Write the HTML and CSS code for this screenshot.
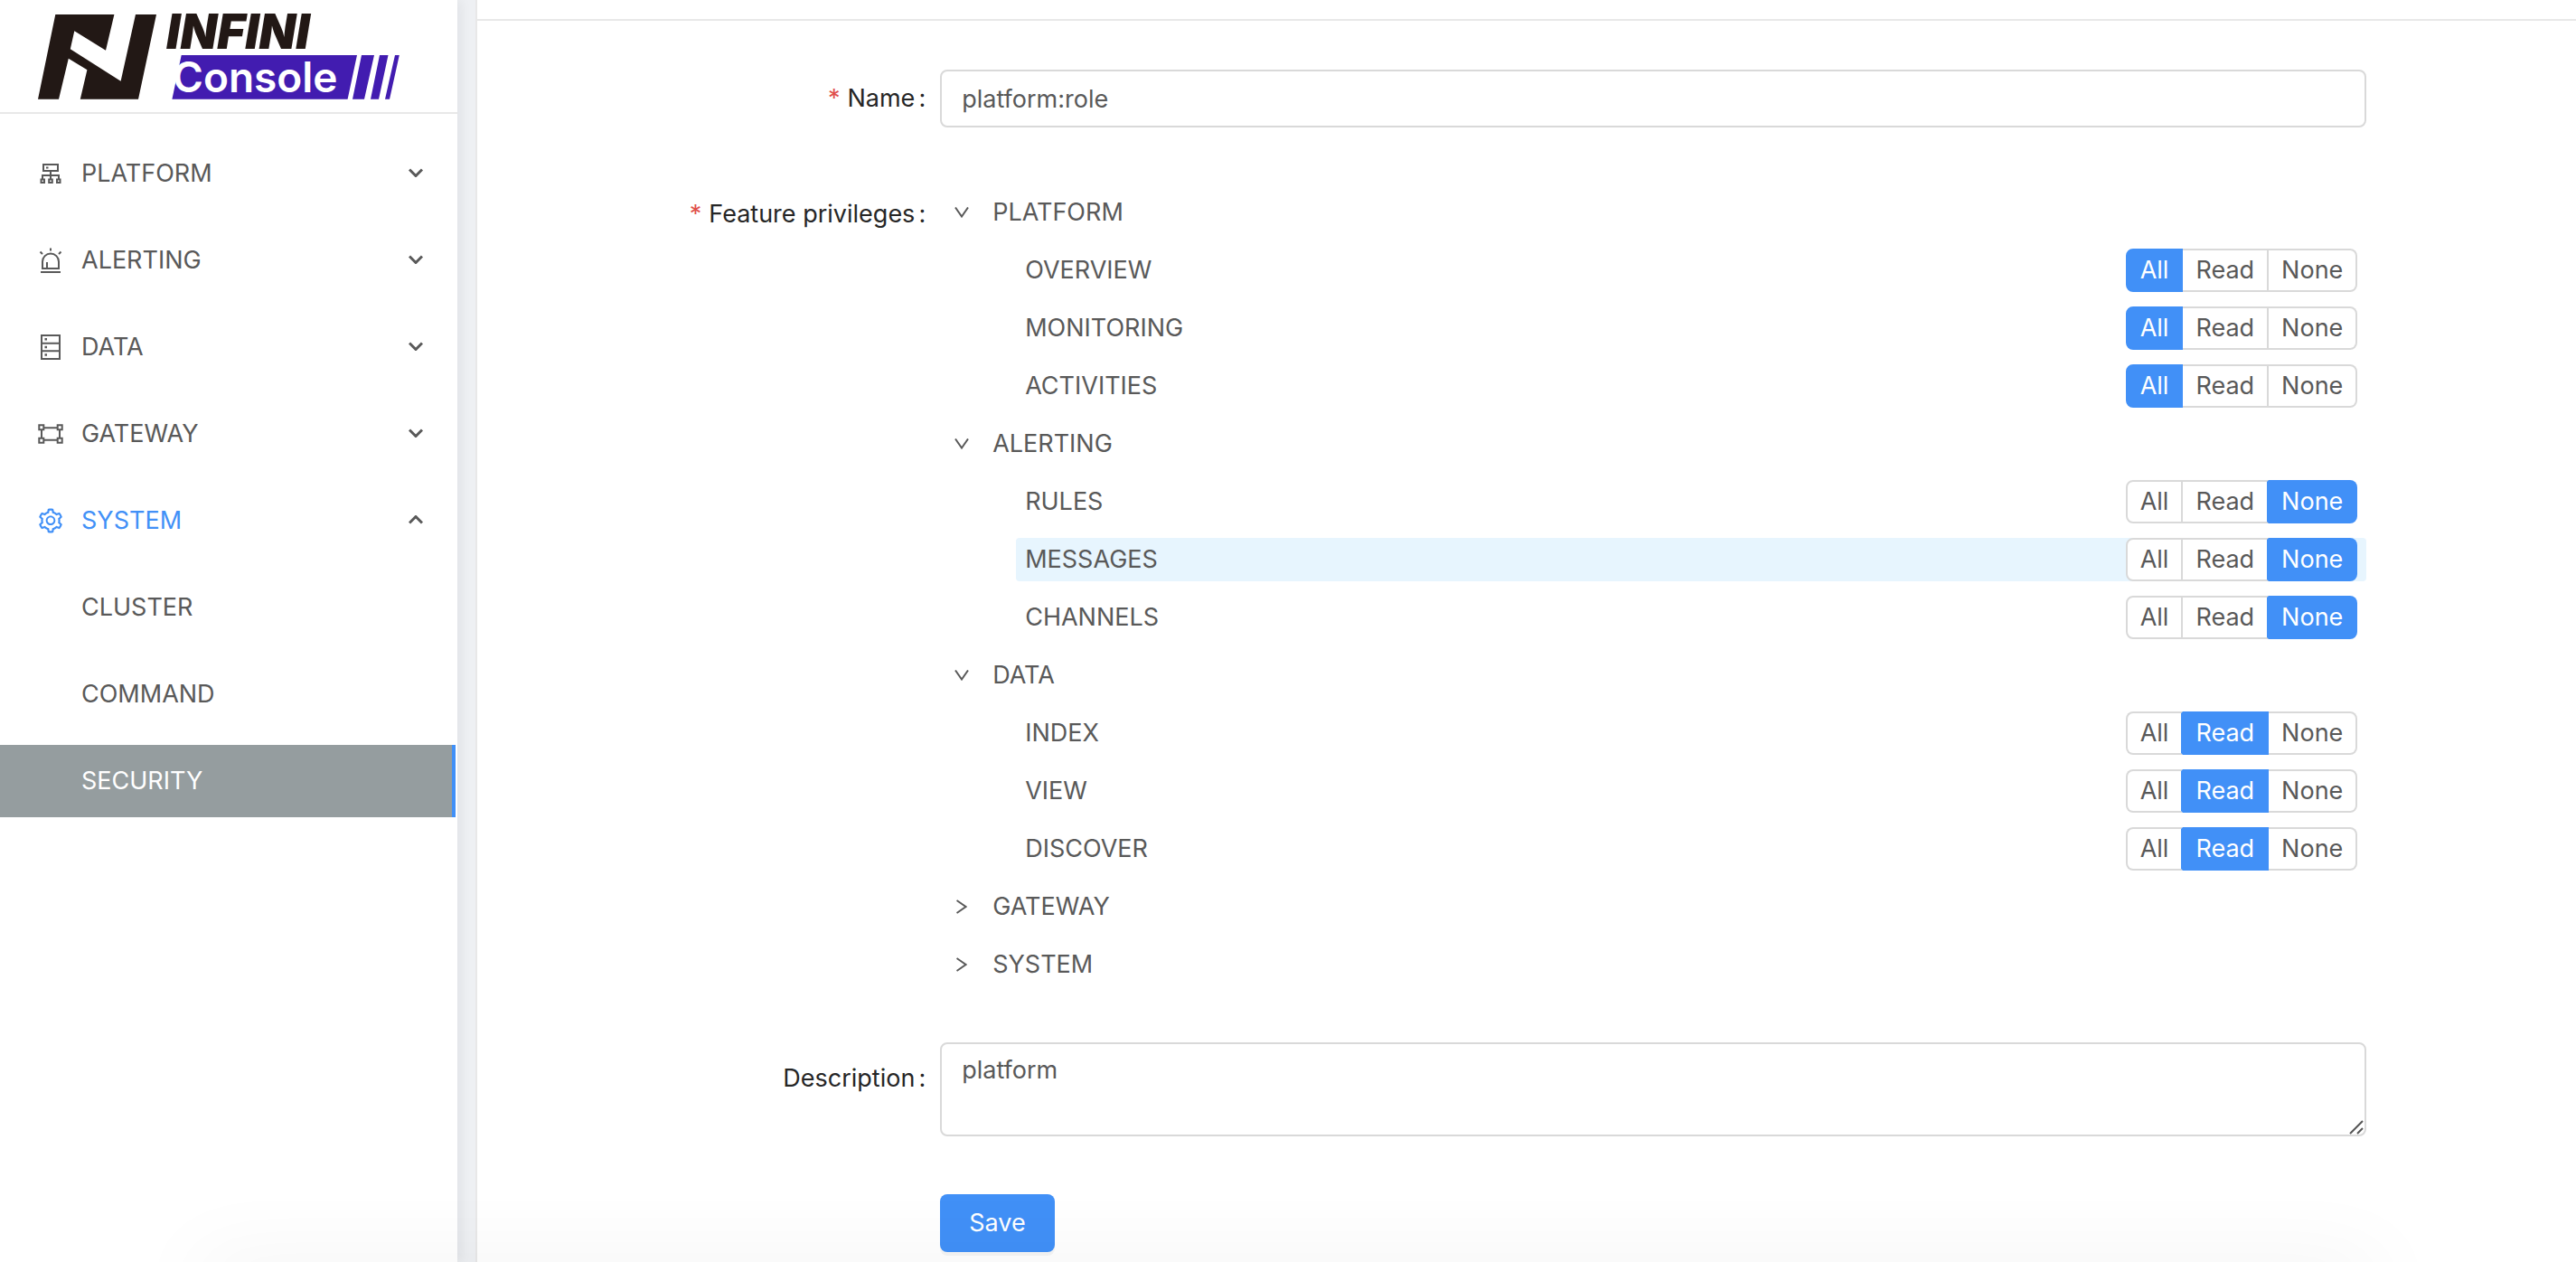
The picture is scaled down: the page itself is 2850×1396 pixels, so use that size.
FILE: index.html
```html
<!DOCTYPE html>
<html lang="en">
<head>
<meta charset="utf-8">
<title>INFINI Console - Role</title>
<link rel="stylesheet" href="styles.css">
</head>
<body>
<svg class="sprite" aria-hidden="true">
  <symbol id="chevron" viewBox="0 0 16 10"><path d="M1 1.500L8 8.500L15 1.500" fill="none" stroke="currentColor" stroke-width="3"/></symbol>
  <symbol id="caret" viewBox="0 0 16 12"><path d="M1 .5L8 10.500L15 .5" fill="none" stroke="currentColor" stroke-width="2"/></symbol>
</svg>
<div class="layout">
  <aside class="sidebar">
    <a class="brand" href="#" aria-label="INFINI Console">
      <svg class="brand-logo" viewBox="0 0 460 124">
        <path fill="#221815" d="M61.300 16H126.400L117 55.700L82.300 34.300L77.800 54.300L133.600 89.700L150 16H173L153 109.700H88.800L96.400 77.300L75.800 64.700L65 109.700H42Z"/>
        <path fill="#421cb0" d="M200.700 61H395L384.600 109.700H190.400ZM400 61H414L403 109.700H390ZM420 61H429.500L419 109.700H410ZM437 61H441.800L431 109.700H426Z"/>
        <text class="brand-name" x="184" y="54">INFINI</text>
        <text class="brand-product" x="191" y="102">Console</text>
      </svg>
    </a>
    <nav>
      <ul class="menu">
        <li><button class="menu-item" type="button" aria-expanded="false">
          <svg class="menu-icon" viewBox="0 0 28 28"><g fill="none" stroke="currentColor" stroke-width="2"><path d="M6 4H22V11H6ZM14 11V20M5 20V16H23V20"/><path d="M3.500 20.500H7V24H3.500ZM12.200 20.500H15.800V24H12.200ZM21 20.500H24.500V24H21Z"/></g><path fill="currentColor" d="M9 6.500H11.500V8.500H9Z"/></svg>
          <span class="menu-text">PLATFORM</span><svg class="chevron"><use href="#chevron"/></svg></button></li>
        <li><button class="menu-item" type="button" aria-expanded="false">
          <svg class="menu-icon" viewBox="0 0 28 28"><path fill="none" stroke="currentColor" stroke-width="2" d="M5 23V15.500A9 9 0 0 1 23 15.500V23ZM3 27H25M14 .5V3.500M2.500 4.500L5 7M25.500 4.500L23 7M10 16V23"/></svg>
          <span class="menu-text">ALERTING</span><svg class="chevron"><use href="#chevron"/></svg></button></li>
        <li><button class="menu-item" type="button" aria-expanded="false">
          <svg class="menu-icon" viewBox="0 0 28 28"><path fill="none" stroke="currentColor" stroke-width="2" d="M4 1H24V27H4ZM4 9.700H24M4 18.300H24"/><path fill="currentColor" d="M7.500 4H10V6.500H7.500ZM7.500 12.700H10V15.200H7.500ZM7.500 21.300H10V23.800H7.500Z"/></svg>
          <span class="menu-text">DATA</span><svg class="chevron"><use href="#chevron"/></svg></button></li>
        <li><button class="menu-item" type="button" aria-expanded="false">
          <svg class="menu-icon" viewBox="0 0 28 28"><path fill="none" stroke="currentColor" stroke-width="2" d="M1.300 4.300H6.300V9.300H1.300ZM21.700 4.300H26.700V9.300H21.700ZM1.300 18.700H6.300V23.700H1.300ZM21.700 18.700H26.700V23.700H21.700ZM6.300 7.300H21.700M6.300 20.700H21.700M4 9.300V18.700M24 9.300V18.700"/></svg>
          <span class="menu-text">GATEWAY</span><svg class="chevron"><use href="#chevron"/></svg></button></li>
        <li><button class="menu-item open" type="button" aria-expanded="true">
          <svg class="menu-icon" viewBox="48 48 928 928"><path fill="currentColor" d="M924.8 625.7l-65.5-56c3.1-19 4.7-38.4 4.7-57.8s-1.6-38.8-4.7-57.8l65.5-56a32.03 32.03 0 0 0 9.3-35.2l-.9-2.6a443.74 443.74 0 0 0-79.7-137.9l-1.8-2.1a32.12 32.12 0 0 0-35.1-9.5l-81.3 28.9c-30-24.6-63.5-44-99.7-57.6l-15.7-85a32.05 32.05 0 0 0-25.8-25.7l-2.7-.5c-52.1-9.4-106.9-9.4-159 0l-2.7.5a32.05 32.05 0 0 0-25.8 25.7l-15.8 85.4a351.86 351.86 0 0 0-99 57.4l-81.9-29.1a32 32 0 0 0-35.1 9.5l-1.8 2.1a446.02 446.02 0 0 0-79.7 137.9l-.9 2.6c-4.5 12.5-.8 26.5 9.3 35.2l66.3 56.6c-3.1 18.8-4.6 38-4.6 57.1 0 19.2 1.5 38.4 4.6 57.1L99 625.5a32.03 32.03 0 0 0-9.3 35.2l.9 2.6c18.1 50.4 44.9 96.9 79.7 137.9l1.8 2.1a32.12 32.12 0 0 0 35.1 9.5l81.9-29.1c29.8 24.5 63.1 43.9 99 57.4l15.8 85.4a32.05 32.05 0 0 0 25.8 25.7l2.7.5a449.4 449.4 0 0 0 159 0l2.7-.5a32.05 32.05 0 0 0 25.8-25.7l15.7-85a350 350 0 0 0 99.7-57.6l81.3 28.9a32 32 0 0 0 35.1-9.5l1.8-2.1c34.8-41.1 61.6-87.5 79.7-137.9l.9-2.6c4.5-12.3.8-26.3-9.3-35zM788.3 465.9c2.5 15.1 3.8 30.6 3.8 46.1s-1.3 31-3.8 46.1l-6.6 40.1 74.7 63.9a370.03 370.03 0 0 1-42.6 73.6L721 702.8l-31.400 25.800c-23.900 19.600-50.500 35-79.300 45.800l-38.100 14.300-17.900 97a377.500 377.500 0 0 1-85 0l-17.900-97.200-37.800-14.500c-28.500-10.800-55-26.200-78.700-45.700l-31.400-25.900-93.400 33.200c-17-22.900-31.200-47.600-42.600-73.600l75.500-64.500-6.500-40c-2.400-14.900-3.700-30.300-3.700-45.500 0-15.300 1.200-30.600 3.700-45.500l6.500-40-75.500-64.500c11.300-26.100 25.600-50.700 42.600-73.600l93.400 33.200 31.400-25.900c23.700-19.500 50.200-34.900 78.700-45.700l37.900-14.300 17.900-97.200c28.100-3.200 56.800-3.200 85 0l17.900 97 38.100 14.300c28.700 10.800 55.400 26.200 79.300 45.800l31.400 25.800 92.800-32.900c17 22.900 31.200 47.600 42.600 73.600L781.800 426l6.500 39.900z"/><path fill="currentColor" d="M512 326c-97.200 0-176 78.800-176 176s78.800 176 176 176 176-78.800 176-176-78.800-176-176-176zm79.200 255.200A111.600 111.600 0 0 1 512 614c-29.900 0-58-11.700-79.200-32.800A111.600 111.600 0 0 1 400 502c0-29.900 11.700-58 32.800-79.200C454 401.600 482.100 390 512 390c29.900 0 58 11.600 79.200 32.800A111.600 111.600 0 0 1 624 502c0 29.900-11.700 58-32.800 79.200z"/></svg>
          <span class="menu-text">SYSTEM</span><svg class="chevron"><use href="#chevron"/></svg></button></li>
        <li><a class="menu-item sub" href="#">CLUSTER</a></li>
        <li><a class="menu-item sub" href="#">COMMAND</a></li>
        <li><a class="menu-item sub selected" href="#" aria-current="page">SECURITY</a></li>
      </ul>
    </nav>
  </aside>

  <main class="content">
    <form class="form">
      <div class="form-item">
        <label class="form-label required" for="name">Name</label>
        <div class="control"><input class="input" id="name" type="text" value="platform:role"></div>
      </div>

      <div class="form-item">
        <span class="form-label required" id="privileges">Feature privileges</span>
        <ul class="tree" aria-labelledby="privileges">
          <li>
            <button class="node" type="button" aria-expanded="true"><svg class="caret"><use href="#caret"/></svg>PLATFORM</button>
            <ul class="children">
              <li class="leaf"><span>OVERVIEW</span><span class="group" role="radiogroup" aria-label="OVERVIEW">
                <label><input type="radio" name="overview" checked>All</label><label><input type="radio" name="overview">Read</label><label><input type="radio" name="overview">None</label></span></li>
              <li class="leaf"><span>MONITORING</span><span class="group" role="radiogroup" aria-label="MONITORING">
                <label><input type="radio" name="monitoring" checked>All</label><label><input type="radio" name="monitoring">Read</label><label><input type="radio" name="monitoring">None</label></span></li>
              <li class="leaf"><span>ACTIVITIES</span><span class="group" role="radiogroup" aria-label="ACTIVITIES">
                <label><input type="radio" name="activities" checked>All</label><label><input type="radio" name="activities">Read</label><label><input type="radio" name="activities">None</label></span></li>
            </ul>
          </li>
          <li>
            <button class="node" type="button" aria-expanded="true"><svg class="caret"><use href="#caret"/></svg>ALERTING</button>
            <ul class="children">
              <li class="leaf"><span>RULES</span><span class="group" role="radiogroup" aria-label="RULES">
                <label><input type="radio" name="rules">All</label><label><input type="radio" name="rules">Read</label><label><input type="radio" name="rules" checked>None</label></span></li>
              <li class="leaf active"><span>MESSAGES</span><span class="group" role="radiogroup" aria-label="MESSAGES">
                <label><input type="radio" name="messages">All</label><label><input type="radio" name="messages">Read</label><label><input type="radio" name="messages" checked>None</label></span></li>
              <li class="leaf"><span>CHANNELS</span><span class="group" role="radiogroup" aria-label="CHANNELS">
                <label><input type="radio" name="channels">All</label><label><input type="radio" name="channels">Read</label><label><input type="radio" name="channels" checked>None</label></span></li>
            </ul>
          </li>
          <li>
            <button class="node" type="button" aria-expanded="true"><svg class="caret"><use href="#caret"/></svg>DATA</button>
            <ul class="children">
              <li class="leaf"><span>INDEX</span><span class="group" role="radiogroup" aria-label="INDEX">
                <label><input type="radio" name="index">All</label><label><input type="radio" name="index" checked>Read</label><label><input type="radio" name="index">None</label></span></li>
              <li class="leaf"><span>VIEW</span><span class="group" role="radiogroup" aria-label="VIEW">
                <label><input type="radio" name="view">All</label><label><input type="radio" name="view" checked>Read</label><label><input type="radio" name="view">None</label></span></li>
              <li class="leaf"><span>DISCOVER</span><span class="group" role="radiogroup" aria-label="DISCOVER">
                <label><input type="radio" name="discover">All</label><label><input type="radio" name="discover" checked>Read</label><label><input type="radio" name="discover">None</label></span></li>
            </ul>
          </li>
          <li><button class="node" type="button" aria-expanded="false"><svg class="caret"><use href="#caret"/></svg>GATEWAY</button></li>
          <li><button class="node" type="button" aria-expanded="false"><svg class="caret"><use href="#caret"/></svg>SYSTEM</button></li>
        </ul>
      </div>

      <div class="form-item">
        <label class="form-label" for="description">Description</label>
        <div class="area">
          <textarea class="input textarea" id="description">platform</textarea>
          <svg class="grip" viewBox="0 0 16 16" aria-hidden="true"><path d="M1 15L15 1M9 15L15 9" stroke="#555" stroke-width="2"/></svg>
        </div>
      </div>

      <div class="form-item">
        <div class="control actions"><button class="save" type="submit">Save</button></div>
      </div>
    </form>
  </main>
</div>
</body>
</html>
```
FILE: styles.css
```css
* { box-sizing: border-box; }

body {
  margin: 0;
  background: #fff;
  color: #595959;
  font: 27px/48px Inter, "Liberation Sans", sans-serif;
}

/* soft shade along the bottom edge of the window */
body::after {
  content: "";
  position: fixed;
  left: 220px;
  right: 220px;
  bottom: -30px;
  height: 20px;
  box-shadow: 0 0 90px rgba(0, 0, 0, .13);
  pointer-events: none;
}

ul { list-style: none; margin: 0; padding: 0; }
button, input, textarea { font: inherit; color: inherit; }
button { border: 0; background: none; cursor: pointer; }
a { color: inherit; text-decoration: none; }

.sprite { display: none; }

.layout {
  display: grid;
  grid-template-columns: 506px 1fr;
  min-height: 100vh;
  background: #eef0f3;
}

/* sidebar */
.sidebar {
  background: #fff;
  box-shadow: 4px 0 12px rgba(0, 21, 41, .06);
}
.brand {
  display: block;
  border-bottom: 2px solid #e8e8e8;
}
.brand-logo { display: block; width: 460px; height: 124px; }
.brand-name { font: italic 900 53px Inter, sans-serif; fill: #221815; }
.brand-product { font: 600 46px Inter, sans-serif; fill: #fff; }

.menu {
  display: flex;
  flex-direction: column;
  gap: 16px;
  padding: 26px 2px 0 0;
}
.menu-item {
  display: flex;
  align-items: center;
  width: 100%;
  height: 80px;
  padding: 0 36px 0 42px;
  text-align: left;
}
.menu-icon { width: 28px; height: 28px; margin-right: 20px; }
.menu-text { flex: 1; }
.chevron { width: 16px; height: 10px; color: #595959; margin-bottom: 2px; }
.open { color: #4190f7; }
.open .chevron { transform: rotate(180deg); }
.sub { padding-left: 90px; }
.selected {
  background: #959d9f;
  color: #fff;
  border-right: 4px solid #4190f7;
}

/* form */
.content {
  margin-left: 20px;
  padding: 21px 46px 0 48px;
  background: linear-gradient(#e8e8e8, #e8e8e8) 0 21px / 100% 2px no-repeat, #fff;
  border-left: 2px solid #e8e8e8;
}
.form {
  display: flex;
  flex-direction: column;
  gap: 48px;
  padding-top: 48px;
}
.form-item {
  display: grid;
  grid-template-columns: 5fr 17fr 2fr;
}
.form-label {
  padding-right: 16px;
  color: #262626;
  line-height: 80px;
  text-align: right;
}
.form-label::after { content: ":"; margin-left: 4px; }
.required::before {
  content: "*";
  margin-right: 8px;
  color: #e04f4b;
}
.control {
  display: flex;
  align-items: center;
  height: 80px;
}
.input {
  display: block;
  width: 100%;
  height: 64px;
  padding: 0 22px;
  border: 2px solid #d9d9d9;
  border-radius: 8px;
  background: #fff;
  outline: 0;
}
.area { position: relative; padding-bottom: 8px; }
.textarea {
  height: 104px;
  padding: 8px 22px;
  line-height: 42px;
  resize: none;
}
.grip {
  position: absolute;
  right: 3px;
  top: 86px;
  width: 16px;
  height: 16px;
}

/* privilege tree */
.tree { padding: 6px 0; }
.node {
  display: flex;
  align-items: center;
  width: 100%;
  height: 64px;
  padding: 0;
}
.caret { width: 16px; height: 12px; margin: 0 26px 0 16px; }
.node[aria-expanded="false"] .caret { transform: rotate(-90deg); }
.children {
  display: flex;
  flex-direction: column;
  gap: 16px;
  padding: 8px 0 8px 84px;
}
.leaf {
  display: flex;
  justify-content: space-between;
  height: 48px;
  padding: 0 10px;
  border-radius: 4px;
}
.active { background: #e7f5fe; }

.group { display: flex; }
.group label {
  height: 48px;
  padding: 0 14px;
  border: 2px solid #d9d9d9;
  border-left-width: 0;
  background: #fff;
  line-height: 44px;
  cursor: pointer;
}
.group label:first-child { border-left-width: 2px; border-radius: 8px 0 0 8px; }
.group label:last-child { border-radius: 0 8px 8px 0; }
.group label:has(:checked) {
  background: #4190f7;
  border-color: #4190f7;
  color: #fff;
}
.group label:has(+ label > :checked) { border-right-color: #4190f7; }
.group input { position: absolute; opacity: 0; pointer-events: none; }

.actions { grid-column: 2; }
.save {
  height: 64px;
  padding: 0 32px;
  border-radius: 8px;
  background: #4190f7;
  color: #fff;
  box-shadow: 0 4px 0 rgba(0, 0, 0, .04);
}
```
